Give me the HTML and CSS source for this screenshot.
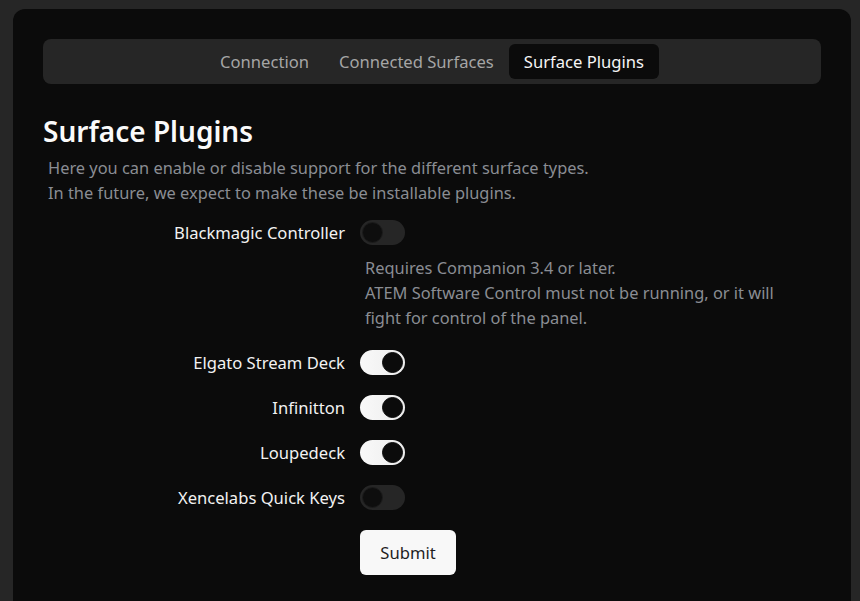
FILE: index.html
```html
<!DOCTYPE html>
<html>
<head>
<meta charset="utf-8">
<link rel="stylesheet" href="styles.css">
</head>
<body>
<div class="card">
  <nav class="tabs">
    <span class="tab">Connection</span>
    <span class="tab">Connected Surfaces</span>
    <span class="tab active">Surface Plugins</span>
  </nav>
  <h1 class="title">Surface Plugins</h1>
  <p class="desc">Here you can enable or disable support for the different surface types.<br>In the future, we expect to make these be installable plugins.</p>
  <form class="form">
    <div class="row">
      <label class="label">Blackmagic Controller</label>
      <div class="field">
        <span class="switch"></span>
        <div class="help">Requires Companion 3.4 or later.<br>ATEM Software Control must not be running, or it will fight for control of the panel.</div>
      </div>
    </div>
    <div class="row">
      <label class="label">Elgato Stream Deck</label>
      <div class="field"><span class="switch on"></span></div>
    </div>
    <div class="row">
      <label class="label">Infinitton</label>
      <div class="field"><span class="switch on"></span></div>
    </div>
    <div class="row">
      <label class="label">Loupedeck</label>
      <div class="field"><span class="switch on"></span></div>
    </div>
    <div class="row">
      <label class="label">Xencelabs Quick Keys</label>
      <div class="field"><span class="switch"></span></div>
    </div>
    <div class="row">
      <span class="label"></span>
      <div class="field"><button type="button" class="submit">Submit</button></div>
    </div>
  </form>
</div>
</body>
</html>
```
FILE: styles.css
```css
html, body {
  margin: 0;
  padding: 0;
  background: #262626;
  font-family: "Noto Sans", sans-serif;
  color: #f2f2f2;
}
body {
  padding: 9px 9px 0 13px;
  height: 601px;
  box-sizing: border-box;
  overflow: hidden;
}
.card {
  background: #0b0b0b;
  border-radius: 12px 12px 0 0;
  padding: 30px 30px 40px 30px;
  height: 600px;
  box-sizing: border-box;
}
.tabs {
  display: flex;
  justify-content: center;
  background: #262626;
  border-radius: 8px;
  padding: 5px;
  height: 45px;
  box-sizing: border-box;
}
.tab {
  display: flex;
  align-items: center;
  padding: 0 15px;
  font-size: 16.6px;
  color: #a5a5a5;
  border-radius: 6px;
}
.tab.active {
  background: #0b0b0b;
  color: #f5f5f5;
}
.title {
  margin: 30px 0 0 0;
  font-size: 28px;
  font-weight: 600;
  line-height: 34px;
  color: #fafafa;
}
.desc {
  margin: 7px 0 0 5px;
  font-size: 16.4px;
  line-height: 25px;
  color: #8a8d93;
}
.form {
  margin-top: 15px;
}
.row {
  display: grid;
  grid-template-columns: 302px 1fr;
  column-gap: 15px;
  margin-bottom: 20px;
}
.label {
  text-align: right;
  font-size: 16.6px;
  line-height: 25px;
  color: #f2f2f2;
}
.field {
  display: flex;
  flex-direction: column;
  align-items: flex-start;
}
.switch {
  display: block;
  width: 45px;
  height: 25px;
  box-sizing: border-box;
  border-radius: 13px;
  background: #262626;
  position: relative;
}
.switch::after {
  content: "";
  position: absolute;
  left: 2px;
  top: 2px;
  width: 21px;
  height: 21px;
  box-sizing: border-box;
  border-radius: 50%;
  background: #0e0e0e;
  border: 1px solid #1c1c1c;
}
.switch.on {
  background: linear-gradient(90deg, #f9f9f9, #ececec);
}
.switch.on::after {
  left: 22px;
  background: #0b0b0b;
  border: 1px solid #0b0b0b;
}
.help {
  margin: 10px 0 0 5px;
  font-size: 16.4px;
  line-height: 25px;
  color: #8a8d93;
  max-width: 440px;
}
.submit {
  font-family: "Noto Sans", sans-serif;
  font-size: 16.6px;
  color: #1e1e1e;
  background: #f8f8f8;
  border: none;
  border-radius: 6px;
  width: 96px;
  height: 45px;
  margin-top: 0;
}
```
